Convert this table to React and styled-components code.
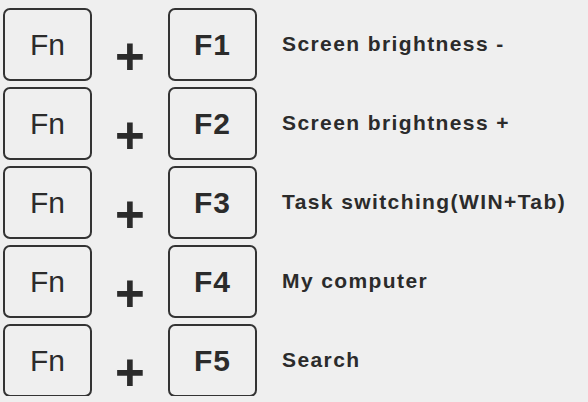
import styled, { createGlobalStyle } from "styled-components";

const GlobalStyle = createGlobalStyle`
  html, body {
    margin: 0;
    padding: 0;
    background: #efefef;
  }
  body {
    font-family: "Liberation Sans", Arial, sans-serif;
    color: #2b2b2b;
  }
`;

const shortcuts = [
  { key: "F1", label: "Screen brightness -" },
  { key: "F2", label: "Screen brightness +" },
  { key: "F3", label: "Task switching(WIN+Tab)" },
  { key: "F4", label: "My computer" },
  { key: "F5", label: "Search" },
];

export default function App() {
  return (
    <>
      <GlobalStyle />
      <List>
        {shortcuts.map((s) => (
          <Row key={s.key}>
            <Key>Fn</Key>
            <Plus>+</Plus>
            <Key $bold>{s.key}</Key>
            <Label>{s.label}</Label>
          </Row>
        ))}
      </List>
    </>
  );
}

const List = styled.div`
  display: flex;
  flex-direction: column;
  gap: 6px;
  padding: 7px 0 0 3px;
`;

const Row = styled.div`
  display: grid;
  grid-template-columns: 89px 76px 89px auto;
  align-items: center;
  height: 73px;
`;

const Key = styled.div`
  box-sizing: border-box;
  height: 73px;
  border: 2.5px solid #333;
  border-radius: 7px;
  display: flex;
  align-items: center;
  justify-content: center;
  font-size: 30px;
  font-weight: ${(p) => (p.$bold ? 700 : 400)};
  letter-spacing: ${(p) => (p.$bold ? "1px" : "0")};
  color: #2b2b2b;
`;

const Plus = styled.div`
  align-self: start;
  margin-top: 24px;
  font-size: 51px;
  line-height: 51px;
  font-weight: 700;
  text-align: center;
  color: #2b2b2b;
`;

const Label = styled.div`
  padding-left: 25px;
  padding-bottom: 2px;
  font-size: 21px;
  font-weight: 700;
  letter-spacing: 1.4px;
  white-space: nowrap;
  color: #2b2b2b;
`;
